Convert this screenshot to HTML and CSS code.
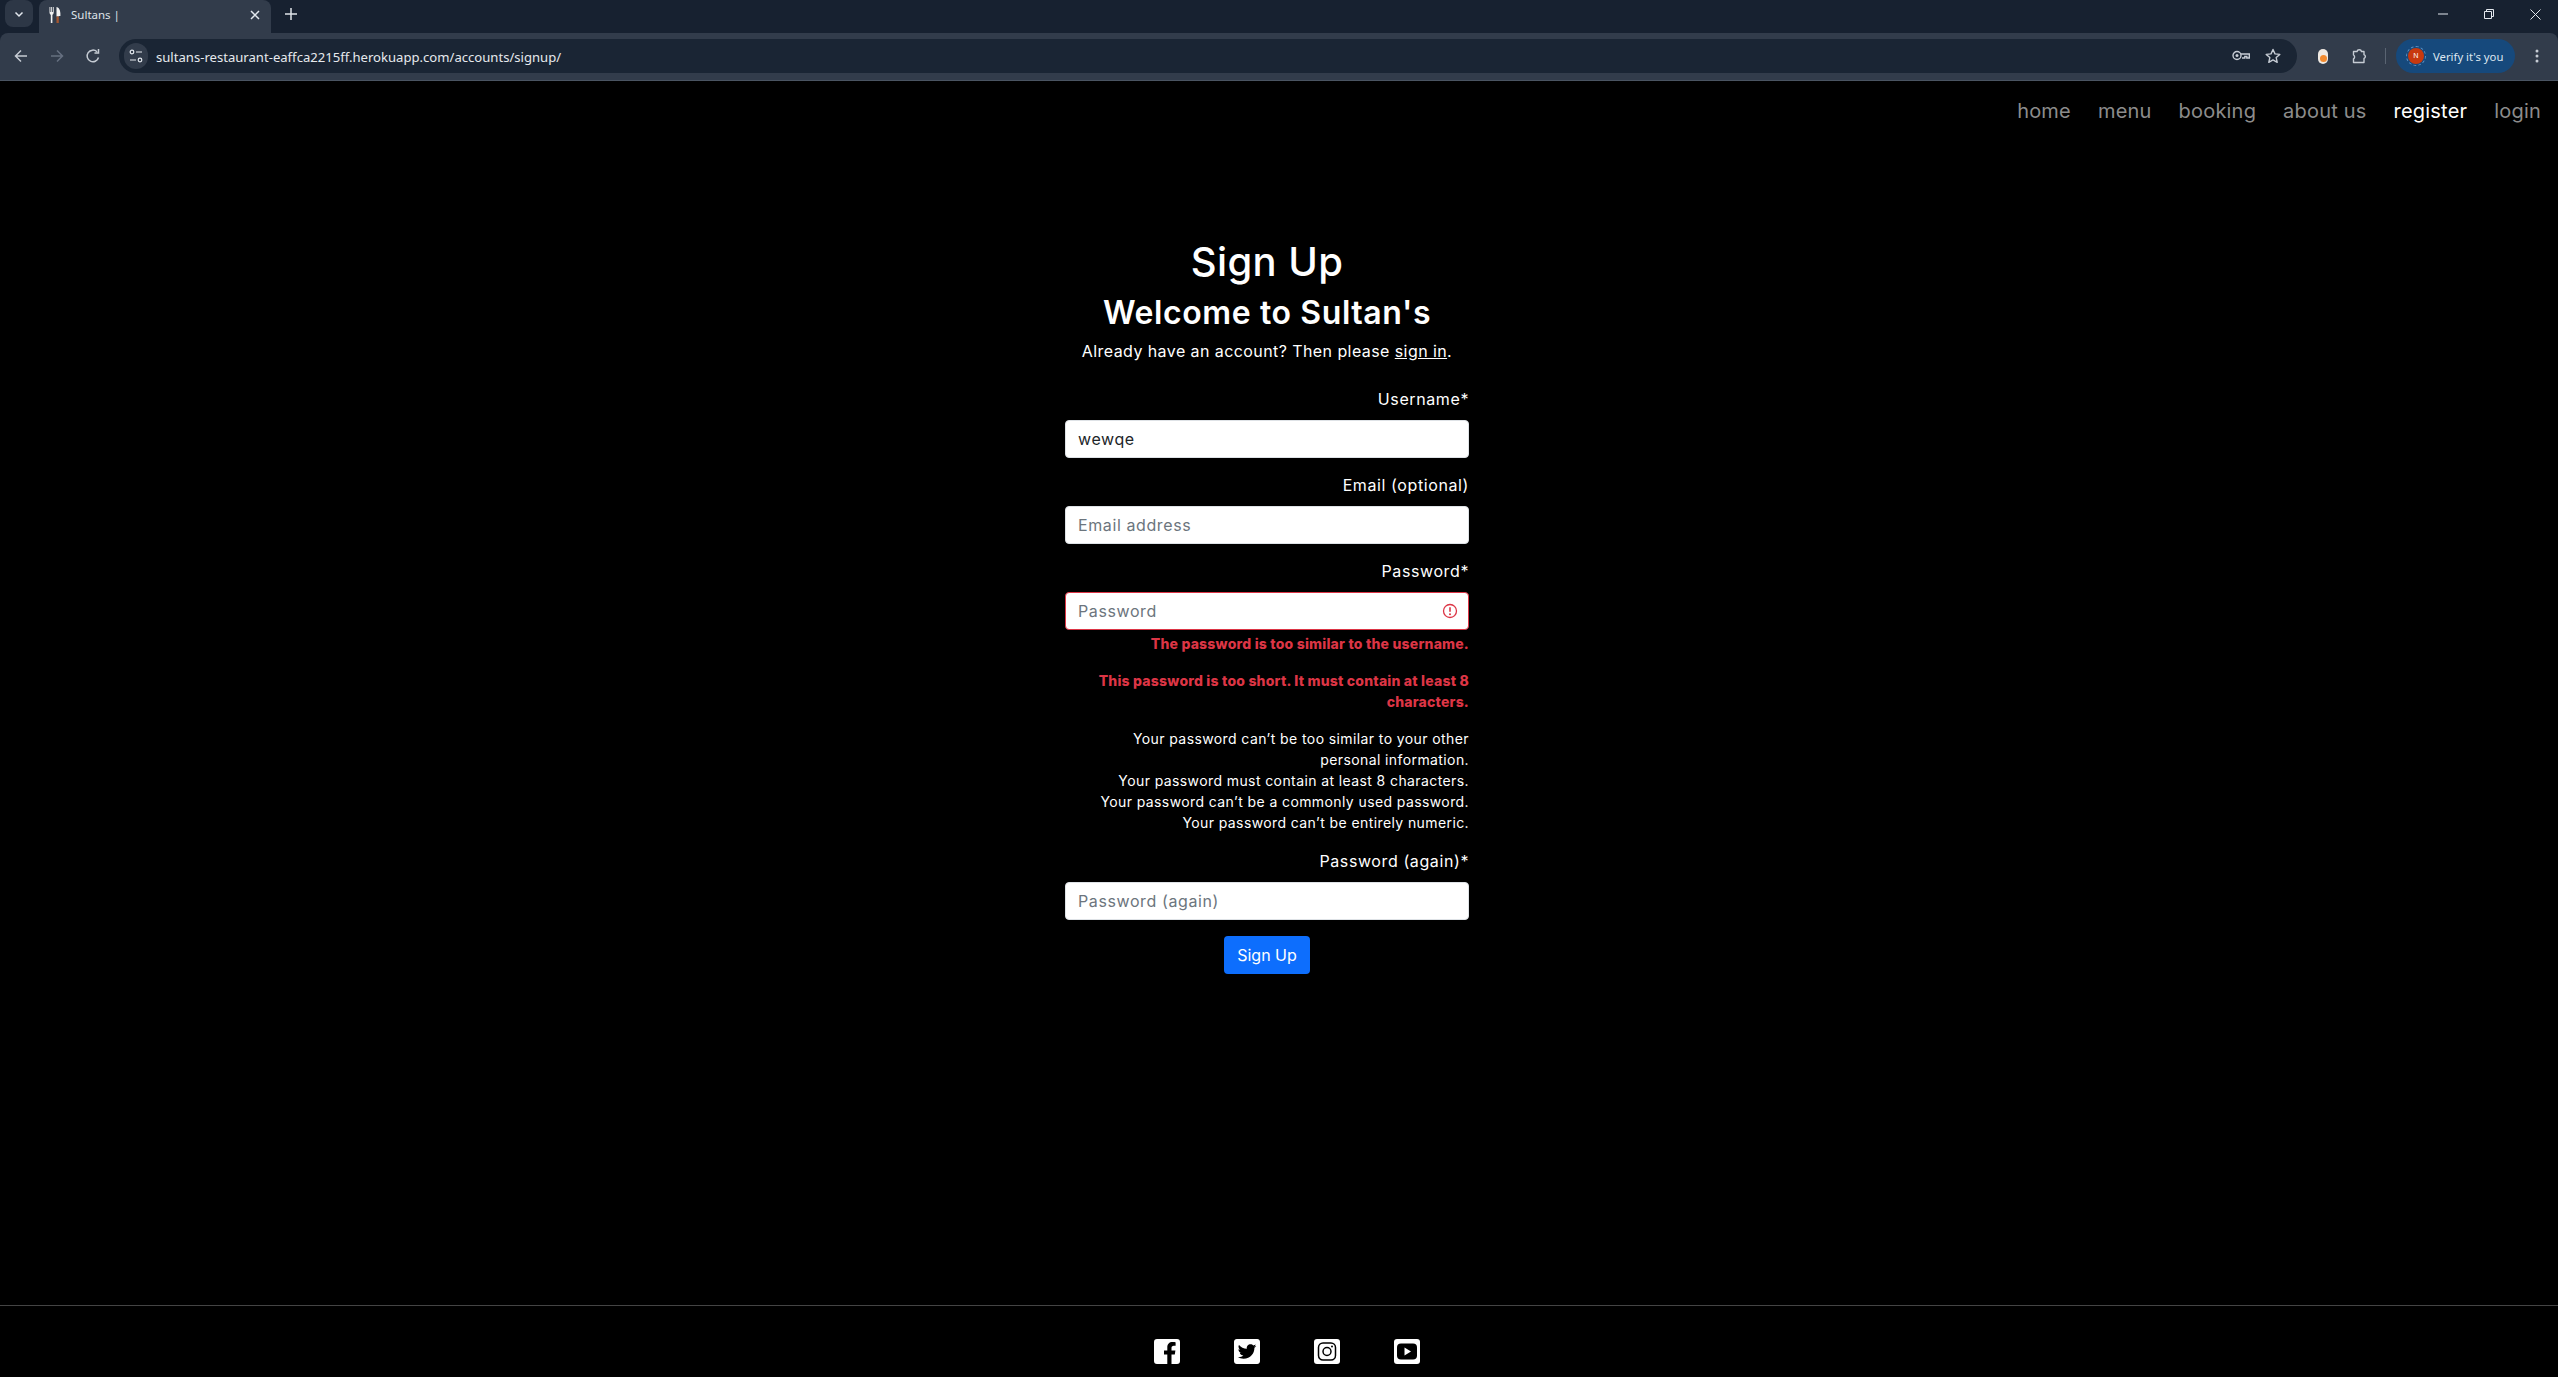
FILE: index.html
```html
<!DOCTYPE html>
<html lang="en">
<head>
    <meta charset="UTF-8">
    <meta name="viewport" content="width=device-width, initial-scale=1.0">
    <title>Sultans |</title>
    <link rel="stylesheet" href="styles.css">
</head>
<body>
    <div class="chrome">
    <div class="tabstrip">
        <div class="tab-search">
            <svg width="12" height="12" viewBox="0 0 12 12"><path d="M2.500 4.500 6 8l3.500-3.500" fill="none" stroke="#e3e8ee" stroke-width="1.500"/></svg>
        </div>
        <div class="tab">
            <svg class="tab-favicon" width="12" height="16" viewBox="0 0 12 16">
                <path d="M.5 0v5.500c0 1.200.7 2 1.300 2.300V16h1.600V7.800C4 7.500 4.700 6.700 4.700 5.500V0H3.800v5H3V0h-.8v5h-.8V0z" fill="#f2f2f2"/>
                <path d="M7.500 0c2.400.4 3.900 3.200 3.900 6.500V9H9.800v.5H7.500z" fill="#f2f2f2"/>
                <path d="M7.500 9.500h2.300V16H7.500z" fill="#a5562f"/>
            </svg>
            <span class="tab-title">Sultans |</span>
            <svg width="10" height="10" viewBox="0 0 10 10"><path d="m1 1 8 8M9 1 1 9" stroke="#e3e8ee" stroke-width="1.500"/></svg>
        </div>
        <svg class="new-tab" width="12" height="12" viewBox="0 0 12 12"><path d="M6 0v12M0 6h12" stroke="#dfe3e8" stroke-width="1.500"/></svg>
        <div class="window-controls">
            <svg width="10" height="10" viewBox="0 0 10 10"><path d="M0 5h10" stroke="#e3e8ee"/></svg>
            <svg width="10" height="10" viewBox="0 0 10 10"><path d="M.5 2.500h7v7h-7zM2.500 2.500v-2h7v7h-2" fill="none" stroke="#e3e8ee"/></svg>
            <svg width="11" height="11" viewBox="0 0 11 11"><path d="m.5.500 10 10M10.500.500l-10 10" stroke="#e3e8ee"/></svg>
        </div>
    </div>

    <div class="toolbar">
        <svg class="tool-icon" width="16" height="16" viewBox="0 0 16 16"><path d="M14 8H3M8 2.500 2.500 8 8 13.500" fill="none" stroke="#c6ccd4" stroke-width="1.500"/></svg>
        <svg class="tool-icon" width="16" height="16" viewBox="0 0 16 16"><path d="M2 8h11M8 2.500 13.500 8 8 13.500" fill="none" stroke="#667080" stroke-width="1.500"/></svg>
        <svg class="tool-icon" width="16" height="16" viewBox="0 0 16 16"><path d="M13.500 9.500A5.800 5.800 0 1 1 12 3.800M13.500 1v4h-4" fill="none" stroke="#c6ccd4" stroke-width="1.500"/></svg>
        <div class="omnibox">
            <span class="site-info">
                <svg width="14" height="14" viewBox="0 0 14 14"><g fill="none" stroke="#e3e8ee" stroke-width="1.200"><circle cx="3" cy="3" r="1.800"/><circle cx="11" cy="11" r="1.800"/><path d="M7 3h6M1 11h6"/></g></svg>
            </span>
            <span class="url">sultans-restaurant-eaffca2215ff.herokuapp.com/accounts/signup/</span>
            <svg class="key-icon" width="18" height="12" viewBox="0 0 18 12"><g fill="none" stroke="#c6ccd4" stroke-width="1.400"><circle cx="5" cy="5.500" r="4"/><path d="M9 4h8.300v4h-2.500V6.500h-2V8H10"/></g><circle cx="5" cy="5.500" r="1.500" fill="#c6ccd4"/></svg>
            <svg class="star-icon" width="16" height="16" viewBox="0 0 16 16"><path d="m8 1.500 2 4.400 4.800.5-3.600 3.200 1 4.700L8 11.900l-4.200 2.400 1-4.700L1.200 6.400 6 5.900z" fill="none" stroke="#c6ccd4" stroke-width="1.400" stroke-linejoin="round"/></svg>
        </div>
        <span class="ext-pill"><span class="ext-dot"></span></span>
        <svg class="puzzle-icon" width="16" height="16" viewBox="0 0 16 16"><path d="M1.500 3.500H5a2.300 2.300 0 0 1 4.500 0H12v3.200a2 2 0 0 1 0 3.800v4H1.500v-3.700a2.200 2.200 0 0 0 0-3.800z" fill="none" stroke="#c6ccd4" stroke-width="1.400" stroke-linejoin="round"/></svg>
        <span class="tool-divider"></span>
        <div class="verify-pill">
            <span class="avatar-ring"><span class="avatar">N</span></span>
            <span>Verify it's you</span>
        </div>
        <svg class="menu-dots" width="4" height="14" viewBox="0 0 4 14"><g fill="#c6ccd4"><circle cx="2" cy="2" r="1.500"/><circle cx="2" cy="7" r="1.500"/><circle cx="2" cy="12" r="1.500"/></g></svg>
    </div>
    </div>

    <div class="page">
        <nav class="site-nav">
            <a href="#">home</a>
            <a href="#">menu</a>
            <a href="#">booking</a>
            <a href="#">about us</a>
            <a href="#" class="active">register</a>
            <a href="#">login</a>
        </nav>

        <main class="signup">
            <h1>Sign Up</h1>
            <h2>Welcome to Sultan's</h2>
            <p class="intro">Already have an account? Then please <a href="#">sign in</a>.</p>

            <form class="signup-form">
                <label for="username">Username*</label>
                <input id="username" type="text" value="wewqe">

                <label for="email">Email (optional)</label>
                <input id="email" type="text" placeholder="Email address">

                <label for="password">Password*</label>
                <div class="invalid-wrap">
                    <input id="password" class="is-invalid" type="password" placeholder="Password">
                    <svg class="invalid-icon" width="16" height="16" viewBox="0 0 16 16"><circle cx="8" cy="8" r="6.500" fill="none" stroke="#dc3545" stroke-width="1.300"/><path d="M8 4.200v4.600" stroke="#dc3545" stroke-width="1.600"/><circle cx="8" cy="11.200" r="1" fill="#dc3545"/></svg>
                </div>
                <p class="error first">The password is too similar to the username.</p>
                <p class="error">This password is too short. It must contain at least 8 characters.</p>
                <div class="help">
                    <div>Your password can’t be too similar to your other<br>personal information.</div>
                    <div>Your password must contain at least 8 characters.</div>
                    <div>Your password can’t be a commonly used password.</div>
                    <div>Your password can’t be entirely numeric.</div>
                </div>

                <label for="password2">Password (again)*</label>
                <input id="password2" type="password" placeholder="Password (again)">

                <button type="button">Sign Up</button>
            </form>
        </main>

        <footer class="site-footer">
            <svg width="26" height="25" viewBox="0 0 26 25"><path fill="#fff" fill-rule="evenodd" d="M3 0h20a3 3 0 0 1 3 3v19a3 3 0 0 1-3 3h-5.500v-9.500h3.300l.6-4h-3.900V9c0-1.200.6-2.200 2.300-2.200h1.800V3.400s-1.600-.3-3.100-.3c-3.200 0-5.200 1.900-5.200 5.400v3H10v4h3.300V25H3a3 3 0 0 1-3-3V3a3 3 0 0 1 3-3z"/></svg>
            <svg width="26" height="25" viewBox="0 32 448 448" preserveAspectRatio="none"><path fill="#fff" d="M400 32H48C21.500 32 0 53.500 0 80v352c0 26.500 21.500 48 48 48h352c26.500 0 48-21.500 48-48V80c0-26.500-21.500-48-48-48zm-48.900 158.800c.2 2.800.2 5.700.2 8.500 0 86.700-66 186.600-186.600 186.600-37.200 0-71.700-10.800-100.700-29.400 5.300.6 10.400.8 15.800.8 30.700 0 58.900-10.400 81.400-28-28.800-.6-53-19.500-61.300-45.500 10.100 1.500 19.200 1.500 29.600-1.200-30-6.100-52.500-32.500-52.500-64.400v-.8c8.700 4.900 18.900 7.900 29.600 8.300a65.447 65.447 0 0 1-29.200-54.600c0-12.200 3.200-23.400 8.900-33.100 32.300 39.800 80.800 65.800 135.200 68.600-9.300-44.500 24-80.600 64-80.600 18.900 0 35.900 7.900 47.900 20.700 14.800-2.800 29-8.300 41.600-15.800-4.900 15.200-15.100 27.900-28.100 35.900 12.600-1.300 24.800-4.900 36.100-9.800-8.500 12.700-19.200 24-31.300 32.800z"/></svg>
            <svg width="26" height="25" viewBox="0 0 26 25"><rect width="26" height="25" rx="3" fill="#fff"/><rect x="4.500" y="4" width="17" height="17" rx="4.500" fill="none" stroke="#000" stroke-width="1.500"/><circle cx="13" cy="12.500" r="4" fill="none" stroke="#000" stroke-width="1.500"/><circle cx="18" cy="7.500" r="1" fill="#000"/></svg>
            <svg width="26" height="25" viewBox="0 0 26 25"><rect width="26" height="25" rx="3" fill="#fff"/><rect x="3" y="4.500" width="20" height="16" rx="4" fill="#000"/><path d="M10.500 8.500v8l6.500-4z" fill="#fff"/></svg>
        </footer>
    </div>
</body>
</html>
```

FILE: styles.css
```css
* {
    box-sizing: border-box;
}
html, body {
    margin: 0;
    height: 100%;
    overflow: hidden;
}
body {
    display: flex;
    flex-direction: column;
    background-color: #000;
    color: #fff;
    font-family: Inter, "Noto Sans", sans-serif;
}

/* browser chrome */
.chrome {
    background-color: #172130;
    flex-shrink: 0;
}
.tabstrip {
    display: flex;
    align-items: flex-start;
    height: 33px;
}
.tab-search {
    display: flex;
    align-items: center;
    justify-content: center;
    width: 28px;
    height: 27px;
    margin-left: 5px;
    background-color: #2d3746;
    border-radius: 8px;
}
.tab {
    display: flex;
    align-items: center;
    width: 232px;
    height: 33px;
    margin-left: 6px;
    padding: 0 11px 4px 10px;
    background-color: #323c4b;
    border-radius: 8px 8px 0 0;
}
.tab-title {
    flex: 1;
    margin-left: 10px;
    font-family: "Noto Sans", sans-serif;
    font-size: 11.5px;
    color: #dfe3e8;
}
.new-tab {
    margin: 8px 0 0 14px;
}
.window-controls {
    display: flex;
    align-items: center;
    gap: 36px;
    margin-left: auto;
    margin-right: 17px;
    height: 28px;
}
.toolbar {
    display: flex;
    align-items: center;
    height: 48px;
    padding: 0 0 1px 13px;
    background-color: #323c4b;
    border-bottom: 1px solid #4a5462;
    border-radius: 8px 8px 0 0;
}
.tool-icon {
    margin-right: 20px;
}
.omnibox {
    display: flex;
    align-items: center;
    width: 2178px;
    height: 34px;
    margin-left: -2px;
    padding: 0 16px 0 5px;
    background-color: #1a2534;
    border-radius: 17px;
}
.site-info {
    display: flex;
    align-items: center;
    justify-content: center;
    width: 24px;
    height: 26px;
    background-color: #323c4b;
    border-radius: 13px;
}
.url {
    flex: 1;
    margin-left: 8px;
    padding-top: 1px;
    font-family: "Noto Sans", sans-serif;
    font-size: 13.1px;
    color: #e6e9ed;
}
.star-icon {
    margin-left: 15px;
}
.ext-pill {
    position: relative;
    width: 10px;
    height: 15px;
    margin-left: 21px;
    background-color: #efe9e2;
    border-radius: 5px;
}
.ext-dot {
    position: absolute;
    left: 1.5px;
    bottom: 1.5px;
    width: 7px;
    height: 7px;
    background-color: #f28a2e;
    border-radius: 50%;
}
.puzzle-icon {
    margin-left: 24px;
}
.tool-divider {
    width: 1px;
    height: 16px;
    margin-left: 17px;
    background-color: #5a6472;
}
.verify-pill {
    display: flex;
    align-items: center;
    gap: 7px;
    width: 119px;
    height: 34px;
    margin-left: 10px;
    padding-left: 10px;
    background-color: #16497c;
    border-radius: 17px;
    font-family: "Noto Sans", sans-serif;
    font-size: 11.3px;
    color: #dce6f0;
}
.avatar-ring {
    display: flex;
    align-items: center;
    justify-content: center;
    width: 20px;
    height: 20px;
    border: 1px dashed #5f93c6;
    border-radius: 50%;
}
.avatar {
    display: block;
    width: 16px;
    height: 16px;
    line-height: 16px;
    text-align: center;
    background-color: #c8390f;
    border-radius: 50%;
    font-size: 7px;
    color: #fff;
}
.menu-dots {
    margin-left: 20px;
}

/* page */
.page {
    flex: 1;
    display: flex;
    flex-direction: column;
    min-height: 0;
}
.site-nav {
    display: flex;
    justify-content: flex-end;
    gap: 27px;
    padding: 15px 17px 0 0;
    height: 157px;
    font-size: 20px;
    line-height: 30px;
    letter-spacing: 0.2px;
}
.site-nav a {
    color: #8c8c8c;
    text-decoration: none;
}
.site-nav a.active {
    color: #fff;
}
.signup {
    flex: 1;
    display: flex;
    flex-direction: column;
    align-items: center;
    padding-right: 24px;
}
h1 {
    margin: 0 0 8px;
    font-size: 40px;
    line-height: 48px;
    font-weight: 500;
    letter-spacing: 0.4px;
}
h2 {
    margin: 0 0 8px;
    font-size: 32px;
    line-height: 38px;
    font-weight: 600;
    letter-spacing: 0.6px;
}
.intro {
    margin: -1px 0 25px;
    font-size: 16px;
    line-height: 24px;
    letter-spacing: 0.42px;
}
.intro a {
    color: #fff;
}
.signup-form {
    display: flex;
    flex-direction: column;
    width: 404px;
    font-size: 16px;
    line-height: 24px;
    text-align: right;
    letter-spacing: 0.6px;
}
label {
    margin: -1px 0 9px;
}
input {
    display: block;
    width: 100%;
    height: 38px;
    margin-bottom: 16px;
    padding: 6px 12px;
    background-color: #fff;
    border: 1px solid #dee2e6;
    border-radius: 4px;
    color: #212529;
    font-family: inherit;
    font-size: 16px;
    letter-spacing: 0.6px;
}
input::placeholder {
    color: #6c757d;
}
input.is-invalid {
    margin-bottom: 0;
    border-color: #dc3545;
}
.invalid-wrap {
    position: relative;
}
.invalid-icon {
    position: absolute;
    top: 11px;
    right: 11px;
}
.error {
    margin: 0 0 16px;
    color: #dc3545;
    font-size: 14px;
    line-height: 21px;
    font-weight: 800;
    letter-spacing: 0.2px;
}
.error.first {
    margin-top: 3px;
}
.help {
    margin-bottom: 17px;
    font-size: 14px;
    line-height: 21px;
    letter-spacing: 0.4px;
}
button {
    align-self: center;
    width: 86px;
    height: 38px;
    background-color: #0d6efd;
    border: none;
    border-radius: 4px;
    color: #fff;
    font-family: inherit;
    font-size: 16px;
    letter-spacing: 0;
}
.site-footer {
    display: flex;
    justify-content: center;
    gap: 54px;
    height: 72px;
    padding: 33px 0 0 15px;
    border-top: 1px solid #444;
    flex-shrink: 0;
}
```
